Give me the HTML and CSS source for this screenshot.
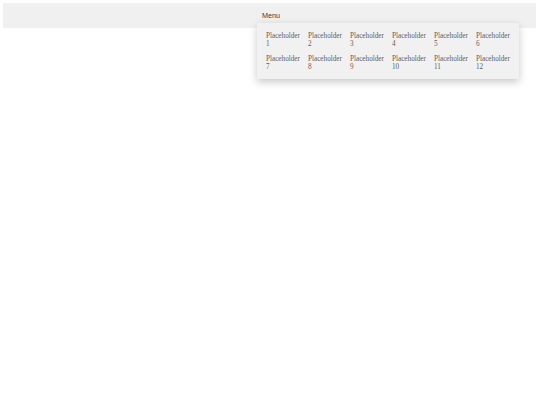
FILE: index.html
```html
<!DOCTYPE html>
<html>
<head>
<meta charset="utf-8">
<link rel="stylesheet" href="styles.css">
</head>
<body>
<nav class="navbar">
  <div class="nav-item">
    <span class="nav-label">Menu</span>
    <div class="dropdown">
      <div class="cell">Placeholder 1</div>
      <div class="cell">Placeholder 2</div>
      <div class="cell">Placeholder 3</div>
      <div class="cell">Placeholder 4</div>
      <div class="cell">Placeholder 5</div>
      <div class="cell">Placeholder 6</div>
      <div class="cell">Placeholder 7</div>
      <div class="cell">Placeholder 8</div>
      <div class="cell">Placeholder 9</div>
      <div class="cell">Placeholder 10</div>
      <div class="cell">Placeholder 11</div>
      <div class="cell">Placeholder 12</div>
    </div>
  </div>
</nav>
</body>
</html>
```
FILE: styles.css
```css
html, body {
  margin: 0;
  padding: 0;
  background: #ffffff;
  min-height: 100%;
}
body {
  padding: 3px 4px 0 3px;
  box-sizing: border-box;
  height: 405px;
}
.navbar {
  display: flex;
  height: 25px;
  background: #f0f0f0;
  padding-left: 254px;
}
.nav-item {
  position: relative;
  display: flex;
  align-items: center;
  padding: 0 5px;
}
.nav-label {
  font-family: "Liberation Sans", Arial, sans-serif;
  font-size: 7.2px;
  color: #3a3a3a;
}
.dropdown {
  position: absolute;
  z-index: 10;
  top: 20px;
  left: 0;
  width: 252px;
  padding: 5px 6px 5px 4px;
  display: grid;
  grid-template-columns: repeat(6, 42px);
  background: #f1f1f1;
  box-shadow: 0 3px 8px rgba(0, 0, 0, 0.22);
}
.cell {
  padding: 3.5px 5px;
  font-family: "Liberation Serif", "Times New Roman", serif;
  font-size: 7.2px;
  line-height: 8px;
  color: #606060;
}
```
